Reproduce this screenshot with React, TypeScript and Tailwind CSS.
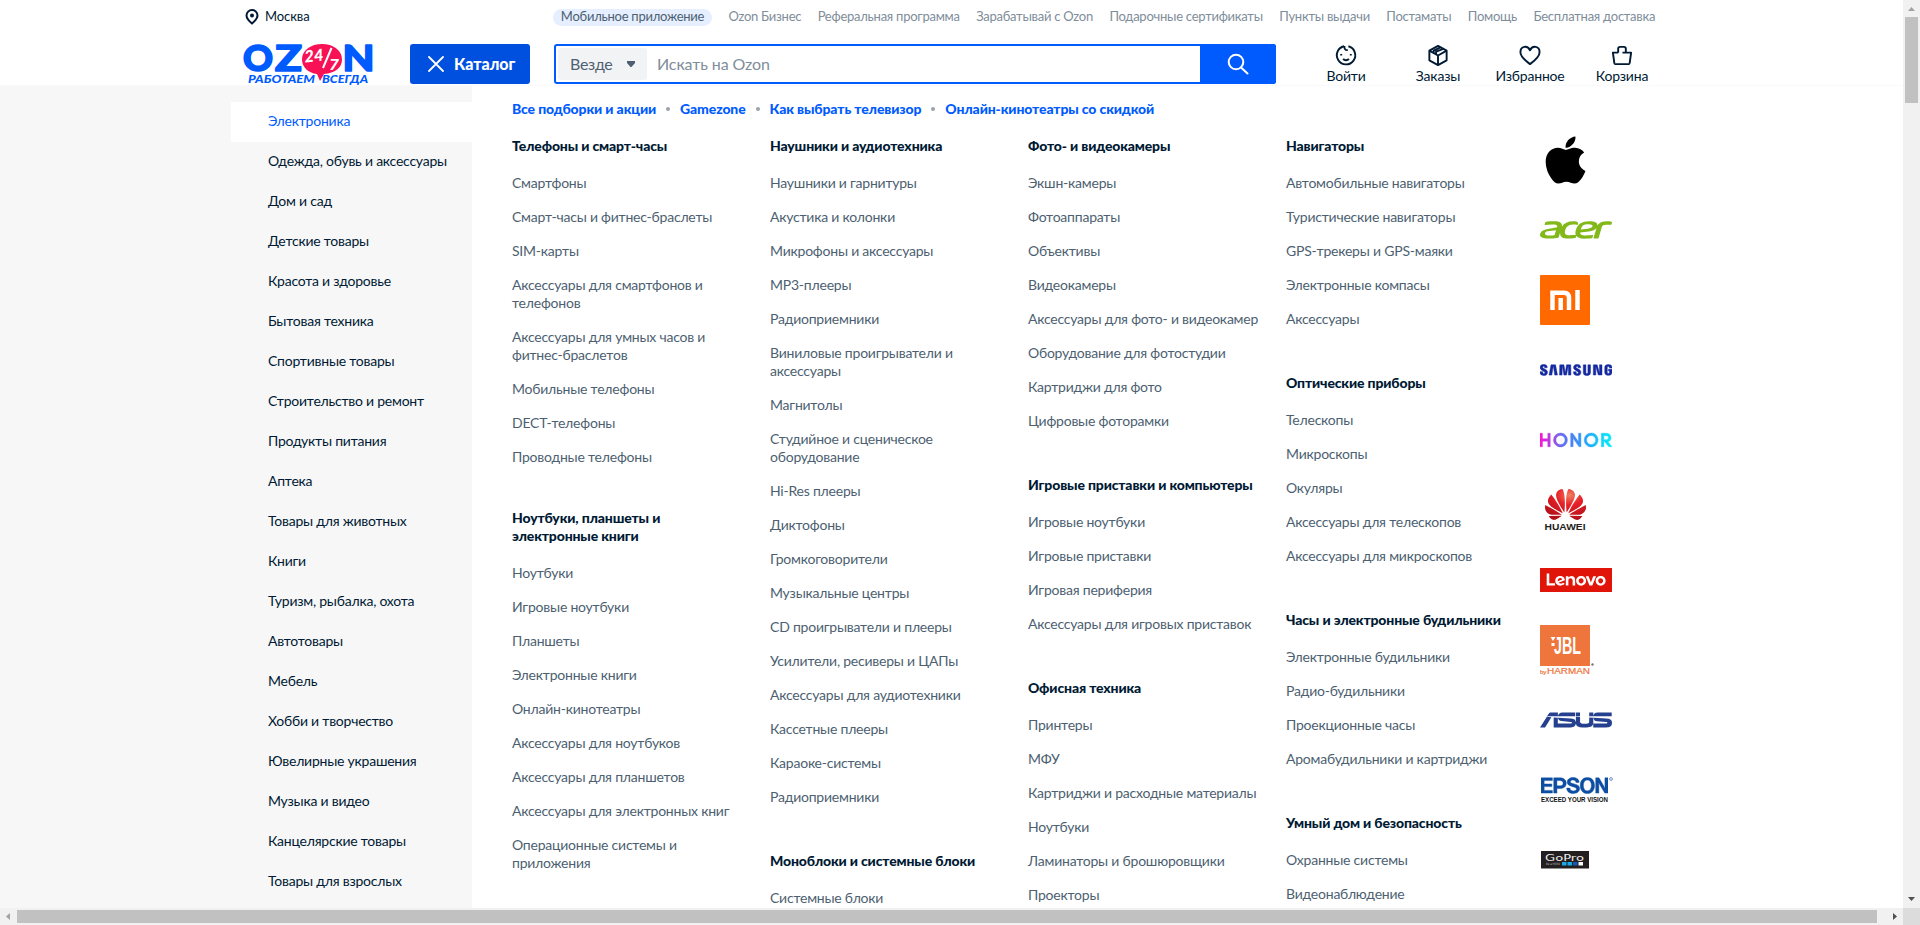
import React from "react";
import { FaApple } from "react-icons/fa";
import { SiAcer, SiAsus, SiEpson, SiHonor, SiHuawei, SiLenovo, SiSamsung } from "react-icons/si";

const topLinks = [
  "Ozon Бизнес",
  "Реферальная программа",
  "Зарабатывай с Ozon",
  "Подарочные сертификаты",
  "Пункты выдачи",
  "Постаматы",
  "Помощь",
  "Бесплатная доставка",
];

const categories = [
  "Электроника",
  "Одежда, обувь и аксессуары",
  "Дом и сад",
  "Детские товары",
  "Красота и здоровье",
  "Бытовая техника",
  "Спортивные товары",
  "Строительство и ремонт",
  "Продукты питания",
  "Аптека",
  "Товары для животных",
  "Книги",
  "Туризм, рыбалка, охота",
  "Автотовары",
  "Мебель",
  "Хобби и творчество",
  "Ювелирные украшения",
  "Музыка и видео",
  "Канцелярские товары",
  "Товары для взрослых",
];

type Group = { title: string; items: string[] };

const columns: Group[][] = [
  [
    {
      title: "Телефоны и смарт-часы",
      items: [
        "Смартфоны",
        "Смарт-часы и фитнес-браслеты",
        "SIM-карты",
        "Аксессуары для смартфонов и\nтелефонов",
        "Аксессуары для умных часов и\nфитнес-браслетов",
        "Мобильные телефоны",
        "DECT-телефоны",
        "Проводные телефоны",
      ],
    },
    {
      title: "Ноутбуки, планшеты и\nэлектронные книги",
      items: [
        "Ноутбуки",
        "Игровые ноутбуки",
        "Планшеты",
        "Электронные книги",
        "Онлайн-кинотеатры",
        "Аксессуары для ноутбуков",
        "Аксессуары для планшетов",
        "Аксессуары для электронных книг",
        "Операционные системы и\nприложения",
      ],
    },
  ],
  [
    {
      title: "Наушники и аудиотехника",
      items: [
        "Наушники и гарнитуры",
        "Акустика и колонки",
        "Микрофоны и аксессуары",
        "MP3-плееры",
        "Радиоприемники",
        "Виниловые проигрыватели и\nаксессуары",
        "Магнитолы",
        "Студийное и сценическое\nоборудование",
        "Hi-Res плееры",
        "Диктофоны",
        "Громкоговорители",
        "Музыкальные центры",
        "CD проигрыватели и плееры",
        "Усилители, ресиверы и ЦАПы",
        "Аксессуары для аудиотехники",
        "Кассетные плееры",
        "Караоке-системы",
        "Радиоприемники",
      ],
    },
    { title: "Моноблоки и системные блоки", items: ["Системные блоки"] },
  ],
  [
    {
      title: "Фото- и видеокамеры",
      items: [
        "Экшн-камеры",
        "Фотоаппараты",
        "Объективы",
        "Видеокамеры",
        "Аксессуары для фото- и видеокамер",
        "Оборудование для фотостудии",
        "Картриджи для фото",
        "Цифровые фоторамки",
      ],
    },
    {
      title: "Игровые приставки и компьютеры",
      items: ["Игровые ноутбуки", "Игровые приставки", "Игровая периферия", "Аксессуары для игровых приставок"],
    },
    {
      title: "Офисная техника",
      items: [
        "Принтеры",
        "МФУ",
        "Картриджи и расходные материалы",
        "Ноутбуки",
        "Ламинаторы и брошюровщики",
        "Проекторы",
      ],
    },
  ],
  [
    {
      title: "Навигаторы",
      items: [
        "Автомобильные навигаторы",
        "Туристические навигаторы",
        "GPS-трекеры и GPS-маяки",
        "Электронные компасы",
        "Аксессуары",
      ],
    },
    {
      title: "Оптические приборы",
      items: ["Телескопы", "Микроскопы", "Окуляры", "Аксессуары для телескопов", "Аксессуары для микроскопов"],
    },
    {
      title: "Часы и электронные будильники",
      items: ["Электронные будильники", "Радио-будильники", "Проекционные часы", "Аромабудильники и картриджи"],
    },
    { title: "Умный дом и безопасность", items: ["Охранные системы", "Видеонаблюдение"] },
  ],
];

const promo = ["Все подборки и акции", "Gamezone", "Как выбрать телевизор", "Онлайн-кинотеатры со скидкой"];

function OzonLogo() {
  return (
    <svg width="132" height="42" viewBox="0 0 132 42" className="block overflow-visible" fontFamily="Lato, sans-serif">
      <g fill="#005bff" stroke="#005bff" strokeWidth="1.6" strokeLinejoin="round" fontWeight="900" fontSize="36">
        <text x="-1" y="27" textLength="30" lengthAdjust="spacingAndGlyphs">O</text>
        <text x="31" y="27" textLength="27" lengthAdjust="spacingAndGlyphs">Z</text>
        <text x="98.500" y="27" textLength="32" lengthAdjust="spacingAndGlyphs">N</text>
      </g>
      <path d="M78 0C89 0 98 6 98 15.500C98 24 91 29 80 30L76 37L73 30C64 29 58 23 58 15.500C58 6 67 0 78 0Z" fill="#f91155" />
      <g fill="#fff" fontWeight="900" fontStyle="italic">
        <text x="61" y="18.500" fontSize="16.500" textLength="19" lengthAdjust="spacingAndGlyphs" transform="rotate(-6 61 18)">24</text>
        <text x="85" y="26" fontSize="15" textLength="10" lengthAdjust="spacingAndGlyphs">7</text>
      </g>
      <path d="M87.500 4L79 24" stroke="#fff" strokeWidth="2" />
      <g fill="#005bff" fontWeight="900" fontStyle="italic" fontSize="12">
        <text x="4" y="38.500" textLength="67" lengthAdjust="spacingAndGlyphs">РАБОТАЕМ</text>
        <text x="78" y="38.500" textLength="46" lengthAdjust="spacingAndGlyphs">ВСЕГДА</text>
      </g>
    </svg>
  );
}

function IconBase({ children }: { children: React.ReactNode }) {
  return (
    <svg width="24" height="24" viewBox="0 0 24 24" fill="none" stroke="#001a34" strokeWidth="2" strokeLinejoin="round">
      {children}
    </svg>
  );
}

const actions = [
  {
    label: "Войти",
    icon: (
      <IconBase>
        <path d="M10 2.300A9.600 9.600 0 1 0 14.500 2.400" />
        <path d="M10.500 2C9.800 5 11.500 6.800 13.800 6.300" />
        <path d="M9 15.500C10.500 17.500 13.500 17.500 15 15.500" />
        <path d="M7 10.500V12M17 10.500V12" />
      </IconBase>
    ),
  },
  {
    label: "Заказы",
    icon: (
      <IconBase>
        <path d="M12 2L21 7V17L12 22L3 17V7Z" />
        <path d="M3 7L12 12L21 7M12 12V22M7.500 9.500V7L14.500 3.500M10 10.500V8L17.500 5" />
      </IconBase>
    ),
  },
  {
    label: "Избранное",
    icon: (
      <IconBase>
        <path d="M12 21C8 18 2 13.500 2 8.500C2 2 9.500 1 12 6.500C14.500 1 22 2 22 8.500C22 13.500 16 18 12 21Z" />
      </IconBase>
    ),
  },
  {
    label: "Корзина",
    icon: (
      <IconBase>
        <path d="M12.500 9H21.500L20 20Q19.800 21 19 21H5Q4.200 21 4 20L2.500 9H8" />
        <path d="M8 9V5Q8 3 10 3H14Q16 3 16 5V9" />
      </IconBase>
    ),
  },
];

function Brands() {
  const slot = "flex h-[70px] items-center";
  return (
    <div className="flex w-[80px] flex-col">
      <div className={slot}>
        <FaApple className="-mt-px ml-[5px] h-[54px] w-[41px] text-black" />
      </div>
      <div className={slot}>
        <SiAcer size={72} className="text-[#83b81a]" />
      </div>
      <div className={slot}>
        <div className="flex h-[50px] w-[50px] items-center justify-center rounded-[1px] bg-[#ff6900]">
          <svg width="30" height="20" viewBox="0 0 30 20" fill="none" stroke="#fff" strokeWidth="4.500">
            <path d="M2.500 20V2.700H14Q19 2.700 19 8V20M10.700 20V8M27.500 0V20" />
          </svg>
        </div>
      </div>
      <div className={slot}>
        <SiSamsung size={72} className="text-[#1428a0]" stroke="#1428a0" strokeWidth={0.15} />
      </div>
      <div className={slot}>
        <svg width="0" height="0">
          <defs>
            <linearGradient id="honor" x1="0" x2="1" y1="0" y2="0">
              <stop offset="0" stopColor="#f814d4" />
              <stop offset=".3" stopColor="#6a6cf0" />
              <stop offset=".6" stopColor="#2a9cfa" />
              <stop offset="1" stopColor="#00f0f8" />
            </linearGradient>
          </defs>
        </svg>
        <SiHonor size={72} fill="url(#honor)" stroke="url(#honor)" strokeWidth={0.15} />
      </div>
      <div className={slot}>
        <svg width="0" height="0">
          <defs>
            <radialGradient id="huawei" cx=".6" cy=".2" r=".8">
              <stop offset="0" stopColor="#f08060" />
              <stop offset=".4" stopColor="#e82028" />
              <stop offset="1" stopColor="#b01018" />
            </radialGradient>
          </defs>
        </svg>
        <div className="ml-[4px] flex w-[42px] flex-col items-center">
          <SiHuawei className="-mt-[5px] -mb-[5px] h-[41px] w-[41px]" fill="url(#huawei)" />
          <svg width="42" height="10" viewBox="0 0 42 10" className="mt-px">
            <text x="0.500" y="8.500" fontFamily="Liberation Sans, sans-serif" fontWeight="700" fontSize="9.500" fill="#231f20" textLength="41" lengthAdjust="spacingAndGlyphs">HUAWEI</text>
          </svg>
        </div>
      </div>
      <div className={slot}>
        <SiLenovo size={72} className="text-[#e1140a]" />
      </div>
      <div className={slot}>
        <svg width="56" height="50" viewBox="0 0 56 50" fontFamily="Liberation Sans, sans-serif">
          <rect width="50" height="41" fill="#ee763c" />
          <text x="14" y="29" fill="#fff" fontWeight="700" fontSize="24" textLength="27" lengthAdjust="spacingAndGlyphs">JBL</text>
          <path d="M10.500 12H15.500L13 16ZM11.500 18H14.500V21H11.500Z" fill="#fff" />
          <g fill="#ee763c" stroke="#ee763c" strokeWidth="0.2">
            <text x="0" y="49.300" fontSize="6">by</text>
            <text x="7" y="49.300" fontSize="8.200" textLength="43" lengthAdjust="spacingAndGlyphs">HARMAN</text>
          </g>
          <circle cx="52.500" cy="39.500" r="1.200" fill="#777" />
        </svg>
      </div>
      <div className={slot}>
        <SiAsus size={72} className="text-[#24408e]" />
      </div>
      <div className={slot}>
        <div className="flex flex-col pl-px">
          <div className="flex items-start">
            <SiEpson size={67} className="-my-[25px] text-[#0d4ea2]" stroke="#0d4ea2" strokeWidth={0.15} />
            <svg width="4" height="4" viewBox="0 0 4 4" fill="none" stroke="#0d4ea2" strokeWidth="0.600" className="ml-px">
              <circle cx="2" cy="2" r="1.400" />
            </svg>
          </div>
          <svg width="72" height="8" viewBox="0 0 72 8" className="mt-px">
            <text x="0" y="6.500" fontFamily="Liberation Sans, sans-serif" fontWeight="700" fontSize="6.600" fill="#111" textLength="67" lengthAdjust="spacingAndGlyphs">EXCEED YOUR VISION</text>
          </svg>
        </div>
      </div>
      <div className={slot}>
        <svg width="50" height="18" viewBox="0 0 50 18" fontFamily="DejaVu Sans, sans-serif">
          <rect x="1" width="48" height="17.500" fill="#231f20" />
          <text x="5" y="9.800" fontSize="8.500" fill="#eee" textLength="39" lengthAdjust="spacingAndGlyphs">GoPro</text>
          <text x="6" y="14" fontSize="3" fill="#bbb" textLength="14" lengthAdjust="spacingAndGlyphs">Be a HERO</text>
          <path d="M22 11H26.500V14.500H22Z" fill="#1ba8e6" />
          <path d="M27.500 11H32V14.500H27.500Z" fill="#1ba8e6" />
          <path d="M33 11H37.500V14.500H33Z" fill="#1159b8" />
          <path d="M38.500 11H43V14.500H38.500Z" fill="#fff" />
        </svg>
      </div>
    </div>
  );
}

export default function App() {
  return (
    <div className="flex h-[925px] w-[1920px] flex-col overflow-hidden bg-white font-['Lato','Noto_Sans',sans-serif] text-[#001a34]">
      <div className="flex h-[908px]">
        <div className="flex w-[1903px] flex-col overflow-hidden">
          <header className="flex h-[86px] shrink-0 flex-col border-b border-[#fafafa] pl-[244px]">
            <div className="flex h-[34px] shrink-0 items-center">
              <svg width="16" height="16" viewBox="0 0 16 16" fill="none" className="shrink-0">
                <path d="M8 14.500C5 12 2.500 9.500 2.500 6.500A5.500 5.500 0 0 1 13.500 6.500C13.500 9.500 11 12 8 14.500Z" stroke="#001a34" strokeWidth="2" />
                <circle cx="8" cy="6.500" r="2" fill="#001a34" />
              </svg>
              <div className="w-[293px] shrink-0 pb-[2px] pl-[5px] text-[13px] leading-4 tracking-[-0.1px]">Москва</div>
              <div className="flex h-[17px] items-center gap-[16.4px] text-[13px] tracking-[-0.25px] whitespace-nowrap text-[#808d9a]">
                <span className="flex h-[17px] w-[159px] items-center justify-center rounded-full bg-[#e5efff] text-[#4d5f71]">
                  Мобильное приложение
                </span>
                {topLinks.map((t) => (
                  <span key={t}>{t}</span>
                ))}
              </div>
            </div>
            <div className="flex h-[51px] shrink-0 pt-[10px]">
              <div className="h-[41px] w-[166px]">
                <OzonLogo />
              </div>
              <button className="flex h-[40px] w-[120px] items-center rounded-[3px] bg-[#0050e0] pl-[18px] text-[16px] font-black text-white">
                <svg width="16" height="16" viewBox="0 0 16 16" stroke="#fff" strokeWidth="1.800" strokeLinecap="round" className="mr-[10px]">
                  <path d="M1 1L15 15M15 1L1 15" />
                </svg>
                Каталог
              </button>
              <div className="ml-[24px] flex h-[40px] w-[722px] items-center rounded-[3px] border-2 border-[#005bff] pl-[2px] text-[16px]">
                <div className="flex h-[32px] w-[89px] items-center justify-between rounded-[3px] bg-[#f2f3f5] px-[12px] tracking-[-0.3px] text-[#4d5f71]">
                  Везде
                  <svg width="8" height="6" viewBox="0 0 8 6" fill="#4d5f71">
                    <path d="M0 0H8V2L4.500 6H3.500L0 2Z" />
                  </svg>
                </div>
                <div className="grow pl-[10px] tracking-[-0.1px] text-[#808d9a]">Искать на Ozon</div>
                <div className="-mr-[2px] flex h-[40px] w-[76px] items-center justify-center rounded-r-[3px] bg-[#005bff]">
                  <svg width="24" height="24" viewBox="0 0 24 24" fill="none" stroke="#fff" strokeWidth="2" strokeLinecap="round">
                    <circle cx="10" cy="10" r="7.300" />
                    <path d="M15 15.500L21.500 21.500" />
                  </svg>
                </div>
              </div>
              <div className="ml-[24px] flex">
                {actions.map((a) => (
                  <div key={a.label} className="flex w-[92px] flex-col items-center text-[14px] leading-[18px] tracking-[-0.2px]">
                    {a.icon}
                    <span>{a.label}</span>
                  </div>
                ))}
              </div>
            </div>
          </header>

          <div className="flex grow overflow-hidden">
            <aside className="flex w-[472px] shrink-0 flex-col bg-[#f7f7f7] pt-[16px] pl-[231px] text-[14px] leading-[18px] tracking-[-0.23px]">
              {categories.map((c, i) => (
                <div
                  key={c}
                  className={
                    i === 0
                      ? "flex h-[40px] shrink-0 items-center bg-white pb-[3px] pl-[37px] text-[#005bff]"
                      : "flex h-[40px] shrink-0 items-center pb-[3px] pl-[37px]"
                  }
                >
                  {c}
                </div>
              ))}
            </aside>
            <main className="flex flex-col pt-[14px] pl-[40px]">
              <nav className="flex h-[18px] items-center text-[14px] leading-[18px] font-black tracking-[-0.13px] text-[#005bff]">
                {promo.map((p, i) => (
                  <React.Fragment key={p}>
                    {i > 0 && <span className="mx-[10px] h-[4px] w-[4px] rounded-full bg-[#99a3ae]" />}
                    <span>{p}</span>
                  </React.Fragment>
                ))}
              </nav>
              <div className="flex">
                <div className="flex pt-[16px]">
                  {columns.map((groups, ci) => (
                    <div key={ci} className="w-[258px] text-[14px] leading-[18px] tracking-[-0.22px] whitespace-pre">
                      {groups.map((g) => (
                        <section key={g.title} className="mb-[43px]">
                          <h3
                            className={
                              g.title.includes("\n")
                                ? "mb-[19px] font-black tracking-[-0.15px]"
                                : "mb-[16px] flex h-[24px] items-center font-black tracking-[-0.15px]"
                            }
                          >
                            {g.title}
                          </h3>
                          <ul className="flex flex-col gap-[16px] text-[#4d5f71]">
                            {g.items.map((it) => (
                              <li key={it}>{it}</li>
                            ))}
                          </ul>
                        </section>
                      ))}
                    </div>
                  ))}
                </div>
                <div className="-ml-[4px] pt-[7px]">
                  <Brands />
                </div>
              </div>
            </main>
          </div>
        </div>
        <div className="flex w-[17px] flex-col items-center bg-[#f1f1f1]">
          <svg width="17" height="17" viewBox="0 0 17 17" fill="#a3a3a3">
            <path d="M5 11L8.500 7L12 11Z" />
          </svg>
          <div className="h-[86px] w-[13px] bg-[#c1c1c1]" />
          <div className="grow" />
          <svg width="17" height="17" viewBox="0 0 17 17" fill="#505050">
            <path d="M5 6L8.500 10L12 6Z" />
          </svg>
        </div>
      </div>
      <div className="flex h-[17px] items-center bg-[#f1f1f1]">
        <svg width="17" height="17" viewBox="0 0 17 17" fill="#a3a3a3">
          <path d="M10 5L6 8.500L10 12Z" />
        </svg>
        <div className="h-[13px] w-[1860px] bg-[#c1c1c1]" />
        <div className="flex w-[26px] justify-end">
          <svg width="17" height="17" viewBox="0 0 17 17" fill="#505050">
            <path d="M7 5L11 8.500L7 12Z" />
          </svg>
        </div>
        <div className="h-[17px] w-[17px] bg-[#dcdcdc]" />
      </div>
    </div>
  );
}
